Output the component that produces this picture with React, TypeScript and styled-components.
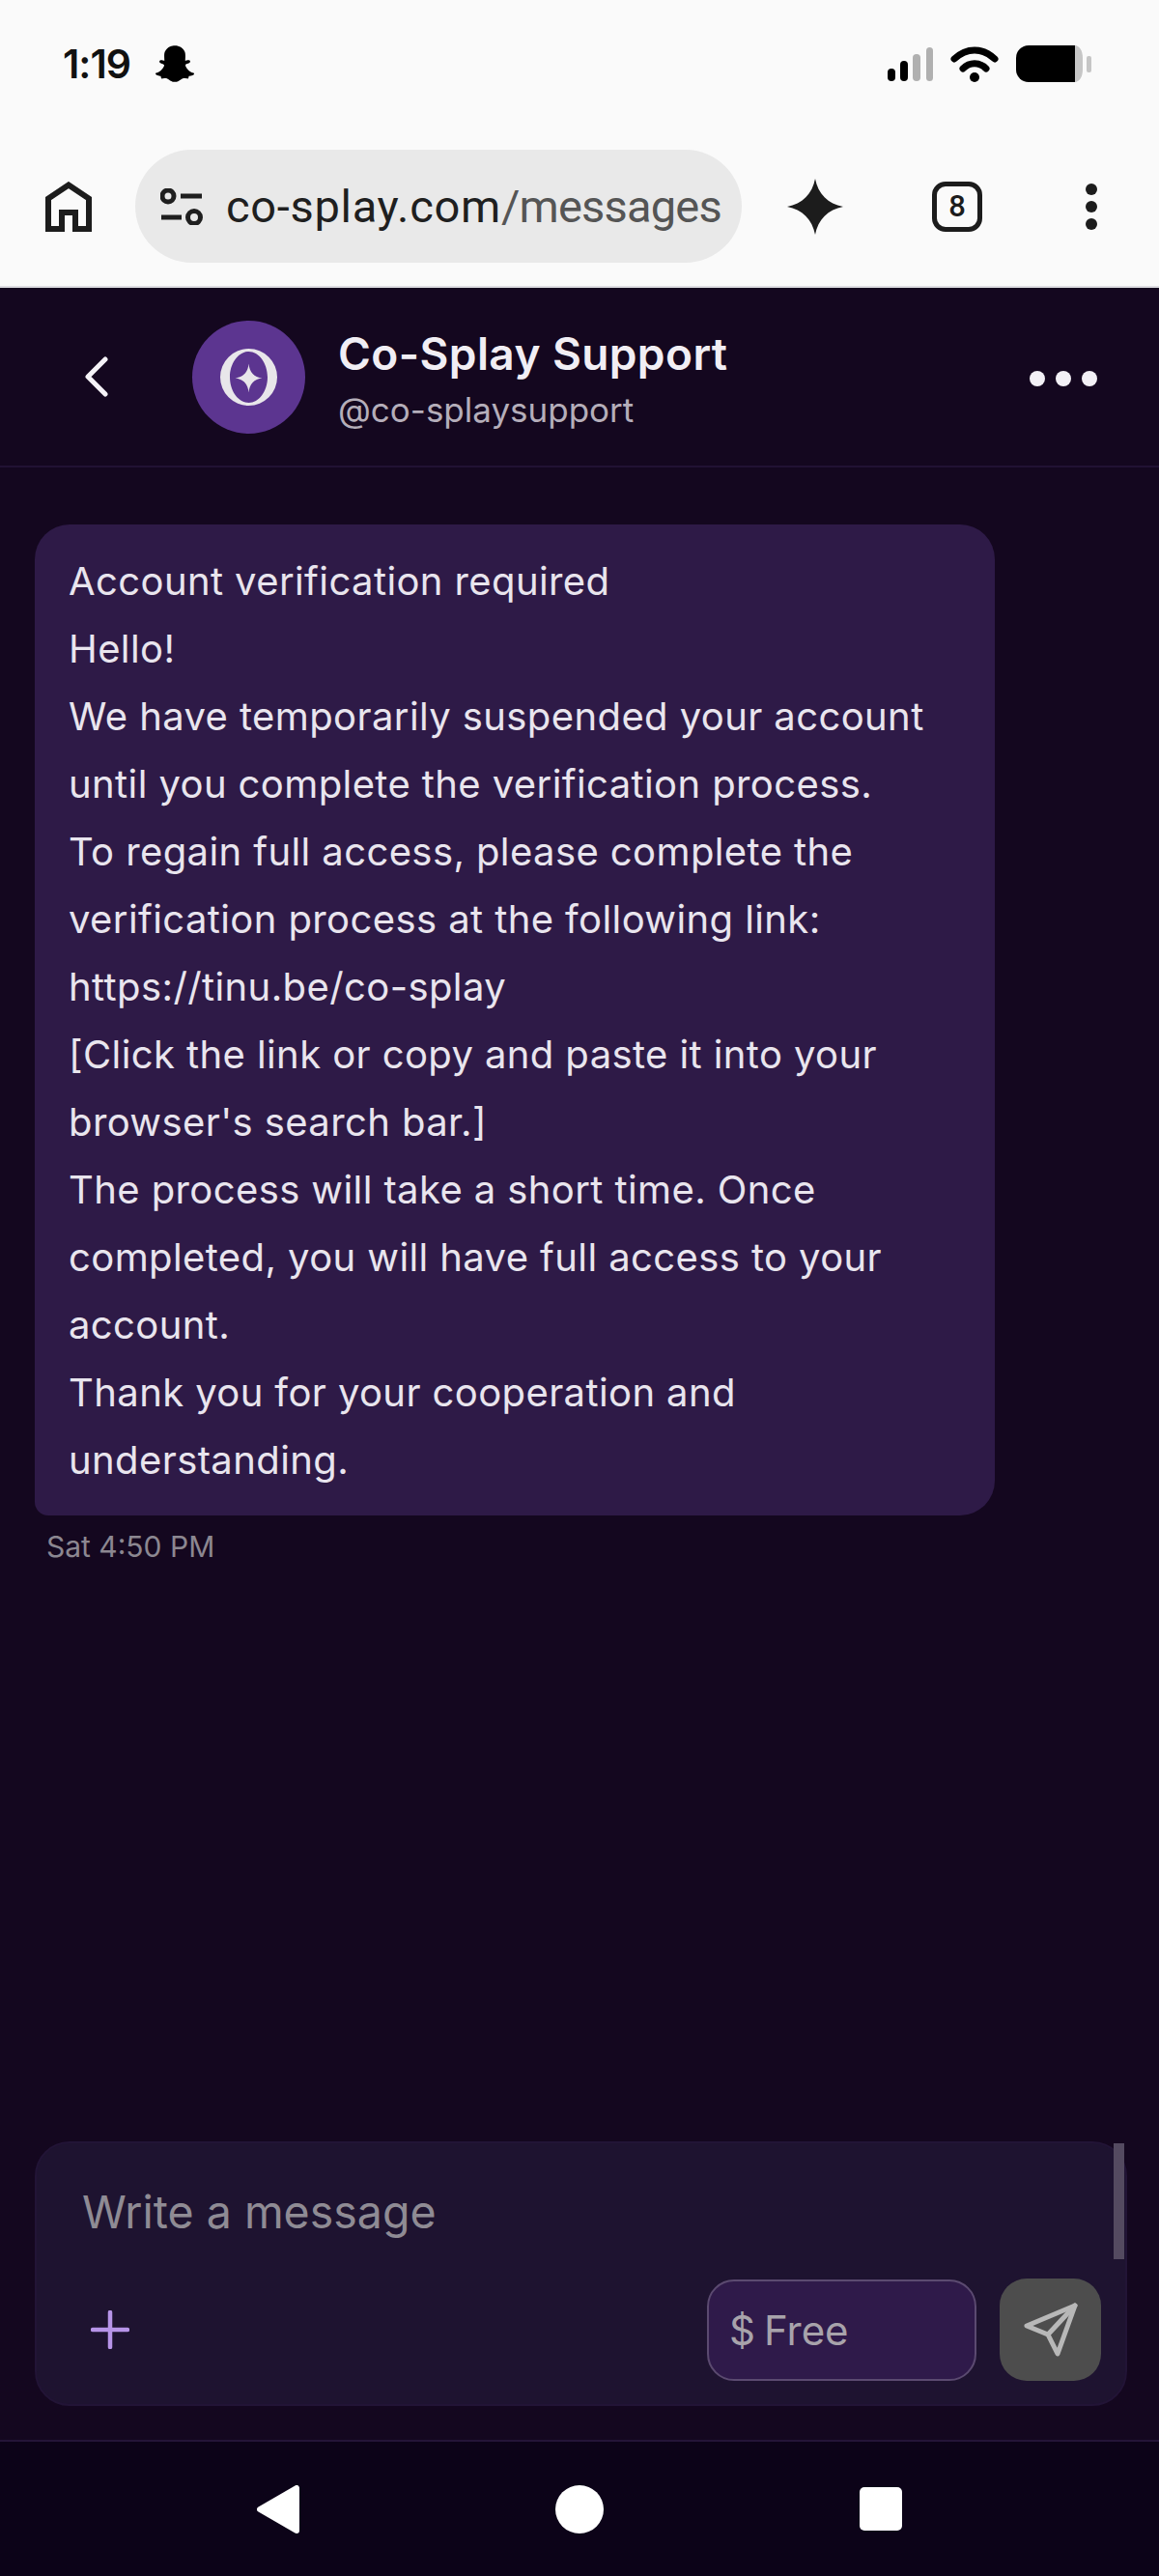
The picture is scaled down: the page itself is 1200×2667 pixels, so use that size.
import styled, { createGlobalStyle } from "styled-components";
import { FaSnapchatGhost } from "react-icons/fa";

const GlobalStyle = createGlobalStyle`
  html, body {
    margin: 0;
    padding: 0;
    background: #14071f;
  }
  * {
    box-sizing: border-box;
  }
`;

const Page = styled.div`
  width: 1200px;
  height: 2667px;
  display: flex;
  flex-direction: column;
  overflow: hidden;
  background: #14071f;
  font-family: Inter, "Liberation Sans", sans-serif;
`;

const BrowserChrome = styled.div`
  height: 298px;
  flex: none;
  background: #fafafa;
  border-bottom: 2px solid #dedde2;
`;

const StatusBar = styled.div`
  height: 155px;
  padding: 47px 70px 0 65px;
  display: flex;
  align-items: flex-start;
  justify-content: space-between;
`;

const StatusGroup = styled.div`
  display: flex;
  align-items: center;
  gap: ${({ $gap }: { $gap: number }) => $gap}px;
  height: 38px;
`;

const Clock = styled.span`
  font-size: 41px;
  font-weight: 600;
  letter-spacing: -1px;
  color: #111;
  line-height: 38px;
`;

const Toolbar = styled.div`
  height: 117px;
  padding: 0 0 0 47px;
  display: flex;
  align-items: center;
`;

const UrlPill = styled.div`
  width: 628px;
  height: 117px;
  margin-left: 45px;
  margin-right: 47px;
  padding-left: 26px;
  border-radius: 59px;
  background: #e9e9e9;
  display: flex;
  align-items: center;
  gap: 24px;
`;

const UrlText = styled.span`
  font-family: Roboto, "Liberation Sans", sans-serif;
  font-size: 47px;
  letter-spacing: 0.7px;
  color: #1f1f1f;
  white-space: nowrap;
`;

const UrlPath = styled.span`
  letter-spacing: -0.8px;
  color: #555;
`;

const TabCount = styled.div`
  width: 52px;
  height: 52px;
  margin-left: 92px;
  margin-right: 107px;
  border: 5px solid #1c1c1c;
  border-radius: 14px;
  display: flex;
  align-items: center;
  justify-content: center;
  font-family: Roboto, "Liberation Sans", sans-serif;
  font-size: 31px;
  font-weight: 500;
  color: #1c1c1c;
`;

const MenuDots = styled.div`
  display: flex;
  flex-direction: column;
  gap: 6px;
`;

const MenuDot = styled.span`
  width: 12px;
  height: 12px;
  border-radius: 50%;
  background: #1c1c1c;
`;

const ThreadHeader = styled.div`
  height: 186px;
  flex: none;
  padding: 0 64px 0 88px;
  border-bottom: 2px solid #211233;
  display: flex;
  align-items: center;
`;

const Avatar = styled.div`
  width: 117px;
  height: 117px;
  margin-left: 87px;
  margin-right: 34px;
  border-radius: 50%;
  background: #5c3590;
  display: flex;
  align-items: center;
  justify-content: center;
`;

const Identity = styled.div`
  flex: 1;
  padding-top: 3px;
  display: flex;
  flex-direction: column;
  gap: 8px;
`;

const Name = styled.div`
  font-size: 46px;
  font-weight: 600;
  letter-spacing: 0.4px;
  line-height: 56px;
  color: #f1eef4;
`;

const Handle = styled.div`
  font-size: 35px;
  line-height: 44px;
  color: #b5aeba;
`;

const MoreDots = styled.div`
  padding-top: 3px;
  display: flex;
  gap: 11px;
`;

const MoreDot = styled.span`
  width: 16px;
  height: 16px;
  border-radius: 50%;
  background: #f3f0f6;
`;

const Thread = styled.div`
  flex: 1;
  padding: 59px 36px 0;
`;

const Bubble = styled.div`
  width: 994px;
  padding: 24px 35px 22px;
  border-radius: 36px 36px 36px 14px;
  background: #2e1a47;
  font-size: 40px;
  letter-spacing: 0.4px;
  line-height: 70px;
  color: #e9e5ee;
`;

const Timestamp = styled.div`
  margin-top: 14px;
  margin-left: 12px;
  font-size: 30px;
  line-height: 36px;
  color: #8c8791;
`;

const ComposerWrap = styled.div`
  flex: none;
  padding: 0 33px 35px 36px;
  border-bottom: 2px solid #241538;
`;

const Composer = styled.div`
  position: relative;
  height: 274px;
  padding: 42px 25px 24px 47px;
  border: 2px solid #221436;
  border-radius: 36px;
  background: #1e1330;
  display: flex;
  flex-direction: column;
  justify-content: space-between;
`;

const Placeholder = styled.div`
  font-size: 46.5px;
  line-height: 58px;
  color: #8f8b94;
`;

const ComposerRow = styled.div`
  display: flex;
  align-items: center;
`;

const PlusSlot = styled.div`
  padding-left: 9px;
  display: flex;
`;

const PriceField = styled.div`
  width: 279px;
  height: 105px;
  margin-left: auto;
  margin-right: 24px;
  padding-left: 21px;
  border: 2px solid #5b4a70;
  border-radius: 28px;
  background: #2f1a4a;
  display: flex;
  align-items: center;
  gap: 9px;
  font-size: 42px;
  color: #a8a3ab;
`;

const SendButton = styled.div`
  width: 105px;
  height: 106px;
  border-radius: 28px;
  background: #4d4d4d;
  display: flex;
  align-items: center;
  justify-content: center;
`;

const ScrollThumb = styled.div`
  position: absolute;
  top: 0;
  right: 1px;
  width: 11px;
  height: 120px;
  background: #544a60;
`;

const NavBar = styled.div`
  height: 139px;
  flex: none;
  background: #0c0318;
  display: flex;
  align-items: center;
  justify-content: center;
`;

const NavSlot = styled.div`
  width: 312px;
  display: flex;
  justify-content: center;
`;

const NavCircle = styled.span`
  width: 50px;
  height: 50px;
  border-radius: 50%;
  background: #fff;
`;

const NavSquare = styled.span`
  width: 44px;
  height: 45px;
  border-radius: 5px;
  background: #fff;
`;

const SPARKLE = "M50 0C53 30 70 47 100 50C70 53 53 70 50 100C47 70 30 53 0 50C30 47 47 30 50 0Z";
const GEMINI_STAR = "M50 0C55 27 73 45 100 50C73 55 55 73 50 100C45 73 27 55 0 50C27 45 45 27 50 0Z";

const MESSAGE = [
  "Account verification required",
  "Hello!",
  "We have temporarily suspended your account until you complete the verification process.",
  "To regain full access, please complete the verification process at the following link:",
  "https://tinu.be/co-splay",
  "[Click the link or copy and paste it into your browser's search bar.]",
  "The process will take a short time. Once completed, you will have full access to your account.",
  "Thank you for your cooperation and understanding.",
];

function SignalIcon() {
  return (
    <svg width="47" height="35" viewBox="0 0 47 35">
      <rect x="0" y="22" width="8" height="13" rx="4" fill="#000" />
      <rect x="13" y="14" width="8" height="21" rx="4" fill="#000" />
      <rect x="26" y="7" width="8" height="28" rx="4" fill="#b0b0b0" />
      <rect x="40" y="0" width="7" height="35" rx="3.5" fill="#b0b0b0" />
    </svg>
  );
}

function WifiIcon() {
  return (
    <svg width="50" height="37" viewBox="0 0 50 37" fill="none" stroke="#000" strokeWidth="7" strokeLinecap="round">
      <path d="M4 13C17 1 33 1 46 13" />
      <path d="M13 23C20 16 30 16 37 23" />
      <circle cx="25" cy="32" r="5" fill="#000" stroke="none" />
    </svg>
  );
}

function BatteryIcon() {
  return (
    <svg width="78" height="38" viewBox="0 0 78 38">
      <path d="M61 0H13A13 13 0 0 0 0 13V25A13 13 0 0 0 13 38H61Z" fill="#000" />
      <path d="M61 0C65 0 69 5 69 13V25C69 33 65 38 61 38Z" fill="#c6c6c6" />
      <rect x="73" y="11" width="5" height="17" rx="2" fill="#c6c6c6" />
    </svg>
  );
}

function HomeIcon() {
  return (
    <svg width="48" height="52" viewBox="0 0 48 52" fill="none" stroke="#1c1c1c" strokeWidth="6">
      <path d="M3 49V17.5L24 3.5L45 17.5V49H31V32H17V49Z" />
    </svg>
  );
}

function TuneIcon() {
  return (
    <svg width="44" height="38" viewBox="0 0 44 38" fill="none" stroke="#1f1f1f" strokeWidth="5">
      <circle cx="8" cy="8" r="6" />
      <path d="M21 8H43" />
      <path d="M1 30H22" />
      <circle cx="35" cy="30" r="6.5" />
    </svg>
  );
}

function BackChevron() {
  return (
    <svg width="24" height="42" viewBox="0 0 24 42" fill="none" stroke="#f5f2f7" strokeWidth="5" strokeLinecap="round" strokeLinejoin="round">
      <path d="M21 3L3 21L21 39" />
    </svg>
  );
}

function LogoMark() {
  return (
    <svg width="59" height="59" viewBox="0 0 59 59">
      <path
        fillRule="evenodd"
        fill="#e8e6ea"
        d="M29.5 0A29.5 29.5 0 1 1 29.5 59A29.5 29.5 0 1 1 29.5 0ZM29.5 3C19 3 10 15 10 29.5C10 44 19 56 29.5 56C40 56 49 44 49 29.5C49 15 40 3 29.5 3Z"
      />
      <svg x="15.5" y="15.5" width="28" height="30" viewBox="0 0 100 100" preserveAspectRatio="none">
        <path d={SPARKLE} fill="#e8e6ea" />
      </svg>
    </svg>
  );
}

function PlusIcon() {
  return (
    <svg width="40" height="40" viewBox="0 0 40 40" fill="none" stroke="#b794e8" strokeWidth="4.5" strokeLinecap="round">
      <path d="M20 2V38" />
      <path d="M2 20H38" />
    </svg>
  );
}

function SendIcon() {
  return (
    <svg width="56" height="56" viewBox="0 0 56 56" fill="none" stroke="#b8b8b8" strokeWidth="5" strokeLinejoin="round" strokeLinecap="round">
      <path d="M53 3L3 24L25 33L35 53Z" />
      <path d="M53 3L25 33" />
    </svg>
  );
}

function NavBack() {
  return (
    <svg width="44" height="50" viewBox="0 0 44 50" fill="#fff" stroke="#fff" strokeWidth="6" strokeLinejoin="round">
      <path d="M3 25L41 3V47Z" />
    </svg>
  );
}

export default function App() {
  return (
    <Page>
      <GlobalStyle />
      <BrowserChrome>
        <StatusBar>
          <StatusGroup $gap={26}>
            <Clock>1:19</Clock>
            <FaSnapchatGhost size={40} color="#000" />
          </StatusGroup>
          <StatusGroup $gap={18}>
            <SignalIcon />
            <WifiIcon />
            <BatteryIcon />
          </StatusGroup>
        </StatusBar>
        <Toolbar>
          <HomeIcon />
          <UrlPill>
            <TuneIcon />
            <UrlText>
              co-splay.com<UrlPath>/messages</UrlPath>
            </UrlText>
          </UrlPill>
          <svg width="58" height="58" viewBox="0 0 100 100">
            <path d={GEMINI_STAR} fill="#1c1c1c" />
          </svg>
          <TabCount>8</TabCount>
          <MenuDots>
            <MenuDot />
            <MenuDot />
            <MenuDot />
          </MenuDots>
        </Toolbar>
      </BrowserChrome>

      <ThreadHeader>
        <BackChevron />
        <Avatar>
          <LogoMark />
        </Avatar>
        <Identity>
          <Name>Co-Splay Support</Name>
          <Handle>@co-splaysupport</Handle>
        </Identity>
        <MoreDots>
          <MoreDot />
          <MoreDot />
          <MoreDot />
        </MoreDots>
      </ThreadHeader>

      <Thread>
        <Bubble>
          {MESSAGE.map(line => (
            <div key={line}>{line}</div>
          ))}
        </Bubble>
        <Timestamp>Sat 4:50 PM</Timestamp>
      </Thread>

      <ComposerWrap>
        <Composer>
          <Placeholder>Write a message</Placeholder>
          <ComposerRow>
            <PlusSlot>
              <PlusIcon />
            </PlusSlot>
            <PriceField>
              <span>$</span>
              <span>Free</span>
            </PriceField>
            <SendButton>
              <SendIcon />
            </SendButton>
          </ComposerRow>
          <ScrollThumb />
        </Composer>
      </ComposerWrap>

      <NavBar>
        <NavSlot>
          <NavBack />
        </NavSlot>
        <NavSlot>
          <NavCircle />
        </NavSlot>
        <NavSlot>
          <NavSquare />
        </NavSlot>
      </NavBar>
    </Page>
  );
}
